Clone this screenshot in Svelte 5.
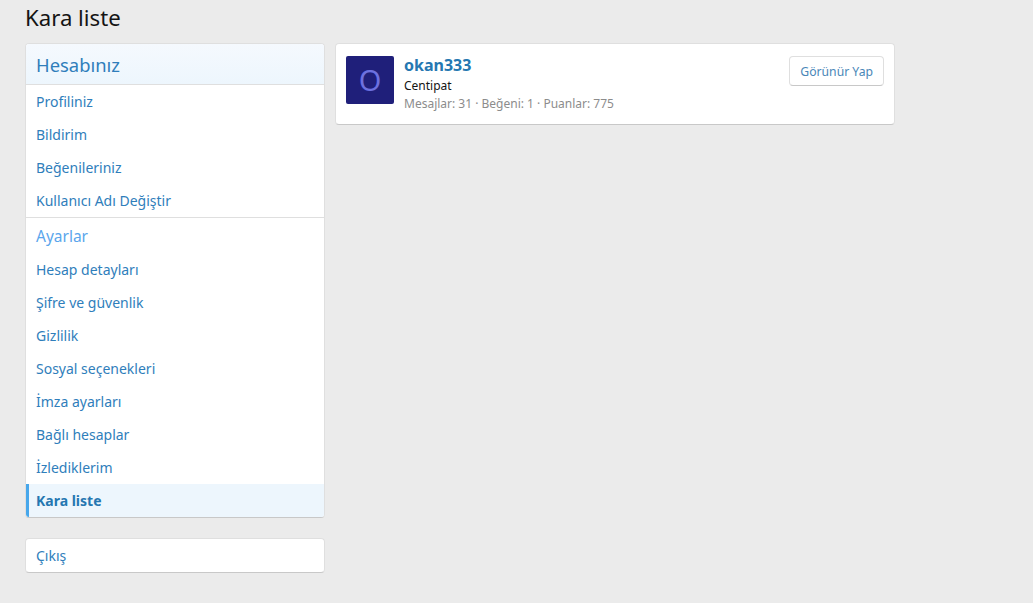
<script>
	const account = ["Profiliniz", "Bildirim", "Beğenileriniz", "Kullanıcı Adı Değiştir"];
	const settings = ["Hesap detayları", "Şifre ve güvenlik", "Gizlilik", "Sosyal seçenekleri", "İmza ayarları", "Bağlı hesaplar", "İzlediklerim"];
</script>

<div class="page">
	<h1>Kara liste</h1>
	<div class="columns">
		<aside>
			<nav class="block">
				<h3 class="head">Hesabınız</h3>
				{#each account as item}
					<a class="row" href="#top">{item}</a>
				{/each}
				<h3 class="sub">Ayarlar</h3>
				{#each settings as item}
					<a class="row" href="#top">{item}</a>
				{/each}
				<a class="row selected" href="#top">Kara liste</a>
			</nav>
			<nav class="block">
				<a class="row" href="#top">Çıkış</a>
			</nav>
		</aside>
		<main>
			<div class="block user">
				<div class="avatar">O</div>
				<div class="info">
					<a class="name" href="#top">okan333</a>
					<div class="title">Centipat</div>
					<div class="stats">Mesajlar: 31 · Beğeni: 1 · Puanlar: 775</div>
				</div>
				<button>Görünür Yap</button>
			</div>
		</main>
	</div>
</div>

<style>
	:global(body) {
		background: #ebebeb;
		font-family: "Noto Sans", "Open Sans", sans-serif;
		font-size: 14px;
	}

	.page {
		width: 895px;
		height: 603px;
		padding: 4px 0 0 25px;
		box-sizing: border-box;
	}

	h1 {
		margin: 0 0 12px;
		font-size: 22.2px;
		font-weight: 400;
		line-height: 27px;
		color: #141414;
	}

	.columns {
		display: flex;
		gap: 10px;
		align-items: flex-start;
	}

	aside {
		width: 300px;
		flex: none;
		display: flex;
		flex-direction: column;
		gap: 20px;
	}

	main {
		flex: 1;
	}

	.block {
		background: #fff;
		border: 1px solid #dfdfdf;
		border-bottom-color: #c8c8c8;
		border-radius: 4px;
		box-sizing: border-box;
		overflow: hidden;
	}

	nav a {
		text-decoration: none;
	}

	.head {
		margin: 0;
		height: 40px;
		padding: 0 10px;
		font-size: 18.4px;
		font-weight: 400;
		line-height: 42px;
		color: #2f7ebb;
		background: linear-gradient(#f5f9fe, #edf6fd);
		border-bottom: 1px solid #dfdfdf;
	}

	.sub {
		margin: 0;
		height: 35px;
		padding: 0 10px;
		font-size: 15.5px;
		font-weight: 400;
		line-height: 37px;
		color: #5ba6ec;
		border-top: 1px solid #dfdfdf;
	}

	.row {
		display: block;
		height: 33px;
		padding: 0 10px;
		line-height: 33px;
		color: #2f7ebb;
	}

	.selected {
		padding-left: 7px;
		border-left: 3px solid #47a7eb;
		font-weight: 700;
		color: #2577b1;
		background: #edf6fd;
	}

	.user {
		display: flex;
		align-items: flex-start;
		padding: 12px 10px;
		height: 82px;
	}

	.avatar {
		width: 48px;
		height: 48px;
		flex: none;
		border-radius: 2px;
		background: #1f1f7a;
		color: #6c71e0;
		font-size: 29px;
		line-height: 48px;
		text-align: center;
	}

	.info {
		flex: 1;
		padding-left: 10px;
	}

	.name {
		display: block;
		font-size: 16px;
		font-weight: 700;
		line-height: 19px;
		color: #2577b1;
		text-decoration: none;
	}

	.title {
		margin-top: 2px;
		font-size: 12px;
		line-height: 18px;
		color: #141414;
	}

	.stats {
		font-size: 12px;
		line-height: 17px;
		color: #8c8c8c;
	}

	button {
		height: 30px;
		padding: 0 10px;
		font: inherit;
		font-size: 12.2px;
		color: #4a87b8;
		background: #fff;
		border: 1px solid #dfdfdf;
		border-bottom-color: #c8c8c8;
		border-radius: 4px;
	}
</style>
